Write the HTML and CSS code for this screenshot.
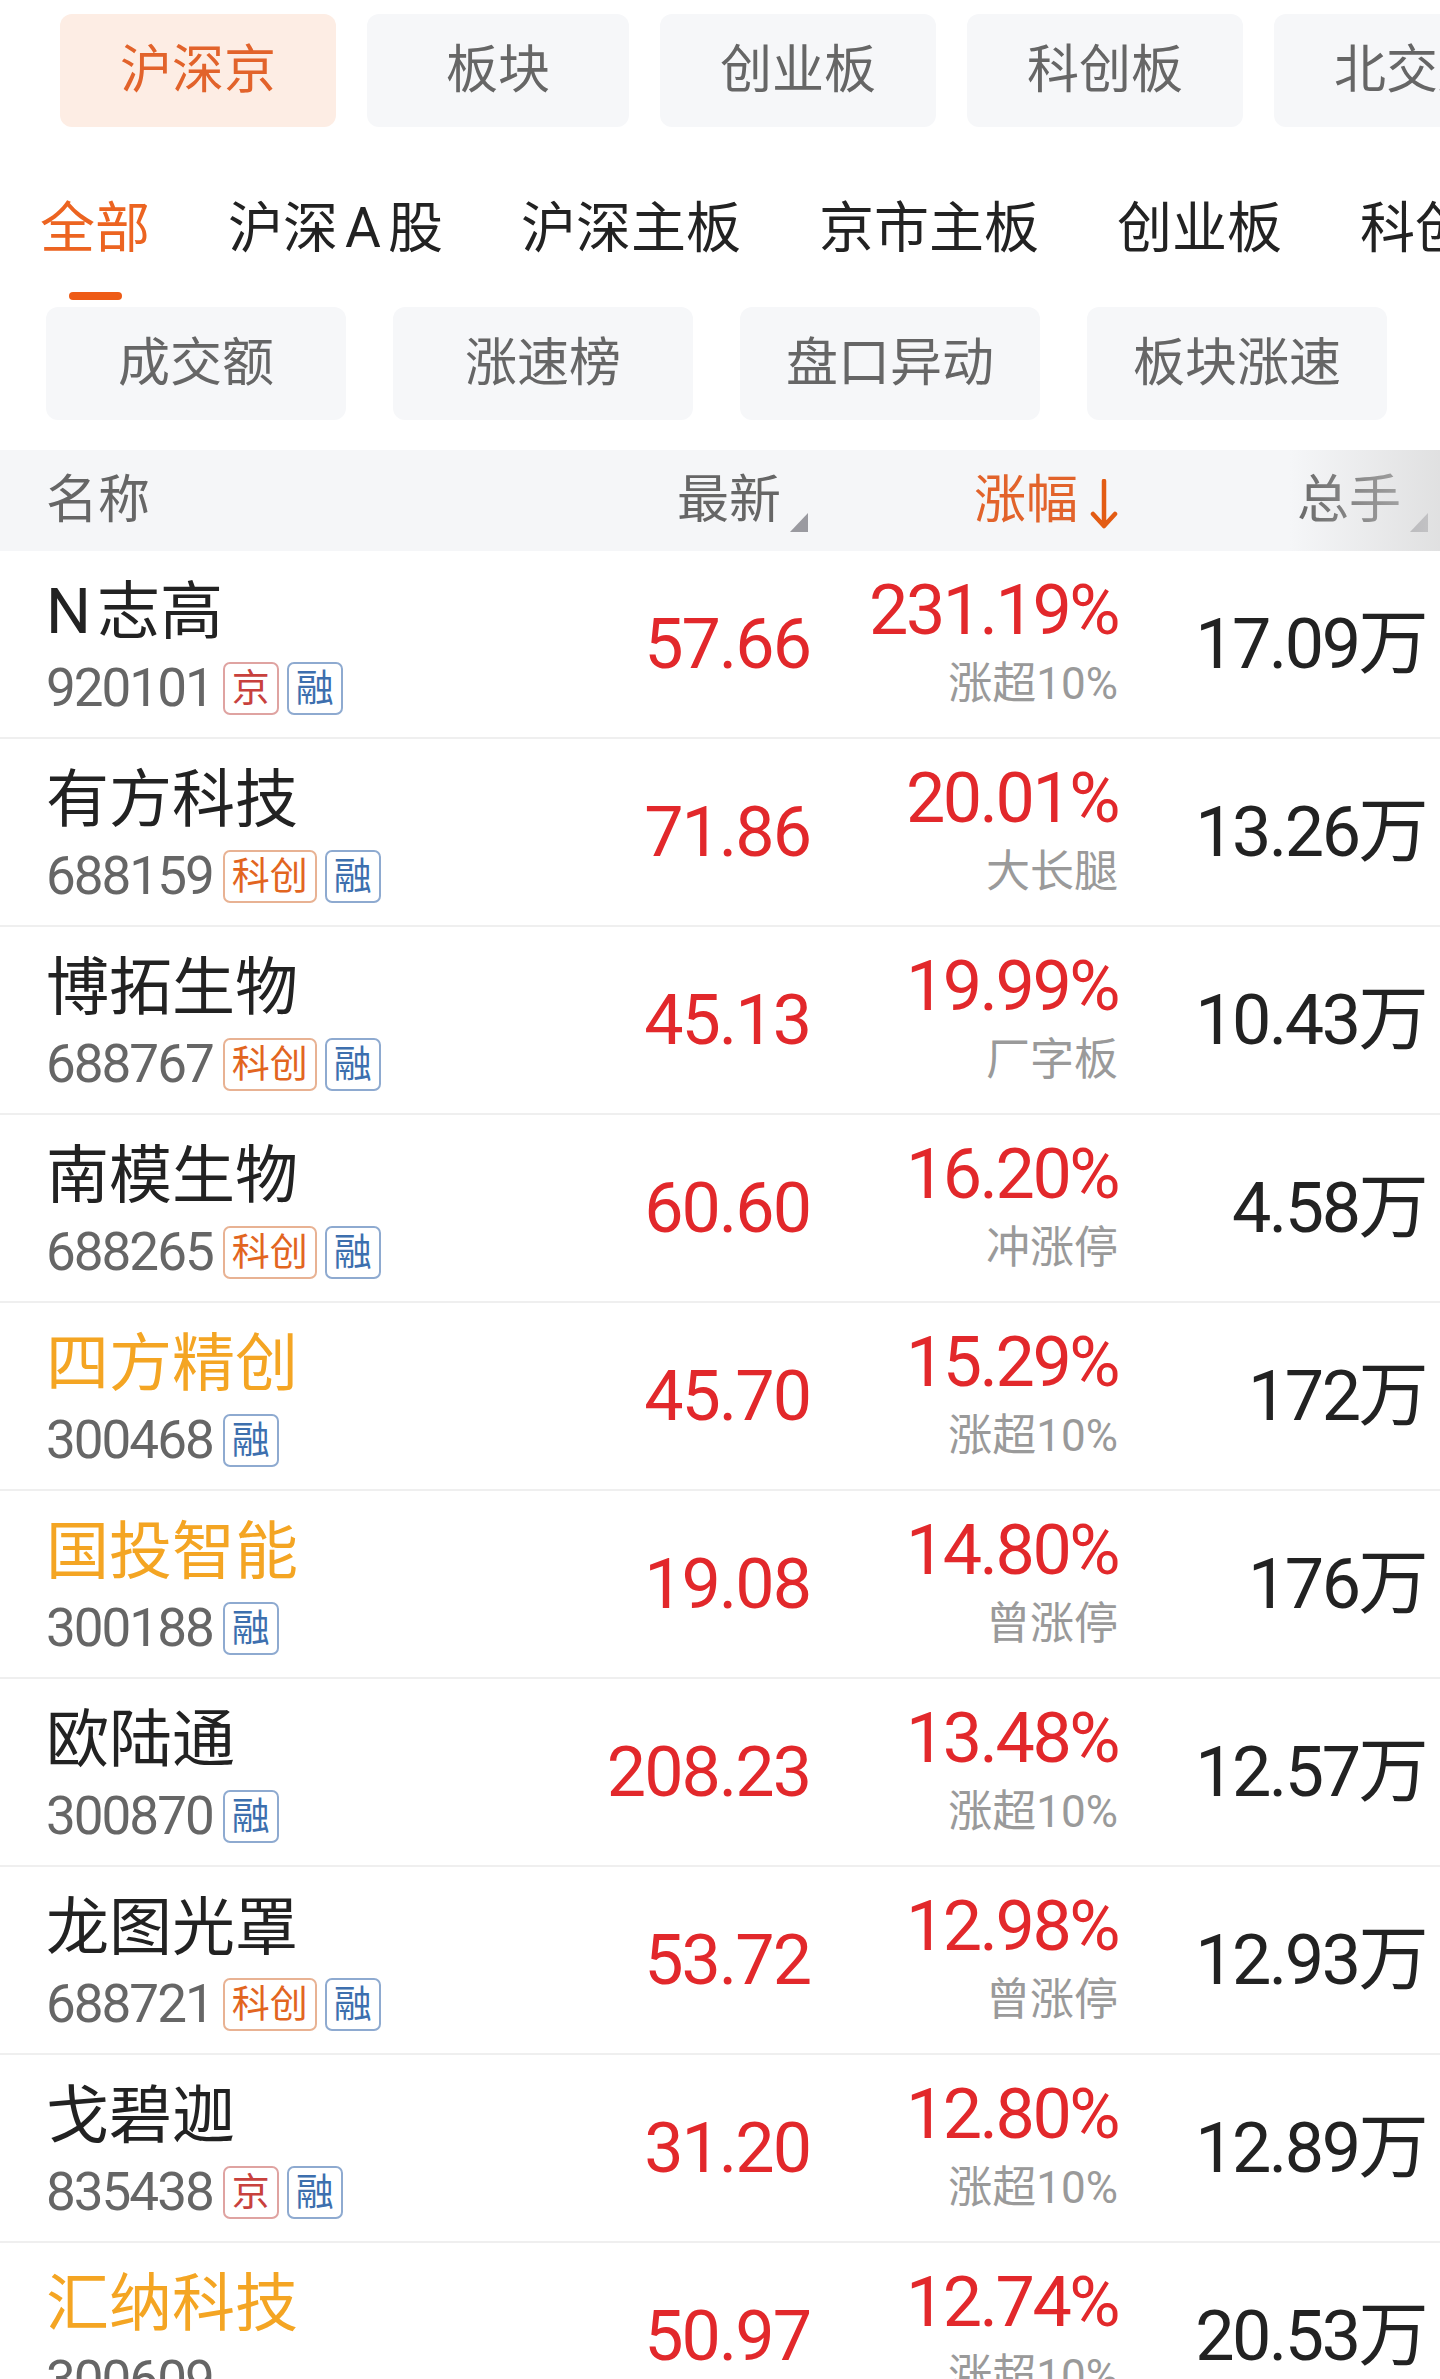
FILE: index.html
```html
<!DOCTYPE html>
<html lang="zh-CN">
<head>
    <meta charset="UTF-8">
    <meta name="viewport" content="width=device-width, initial-scale=1.0">
    <title>涨幅榜</title>
    <link rel="stylesheet" href="styles.css">
</head>
<body>

<!-- 市场切换 -->
<div class="market-tabs">
    <span class="market-tab active">沪深京</span>
    <span class="market-tab">板块</span>
    <span class="market-tab">创业板</span>
    <span class="market-tab">科创板</span>
    <span class="market-tab">北交所</span>
</div>

<!-- 二级分类 -->
<div class="sub-nav">
    <div class="sub-nav-item active"><span class="label">全部</span><i class="bar"></i></div>
    <div class="sub-nav-item"><span class="label">沪深<span class="latin">A</span>股</span></div>
    <div class="sub-nav-item"><span class="label">沪深主板</span></div>
    <div class="sub-nav-item"><span class="label">京市主板</span></div>
    <div class="sub-nav-item"><span class="label">创业板</span></div>
    <div class="sub-nav-item"><span class="label">科创板</span></div>
</div>

<!-- 榜单按钮 -->
<div class="filters">
    <span class="filter-btn">成交额</span>
    <span class="filter-btn">涨速榜</span>
    <span class="filter-btn">盘口异动</span>
    <span class="filter-btn">板块涨速</span>
</div>

<!-- 行情列表 -->
<div class="stock-table">
    <div class="table-head">
        <div class="col-name">名称</div>
        <div class="col-price">最新<svg class="sort-tri" width="18" height="19" viewBox="0 0 18 19"><path d="M18 0V19H0Z" fill="#9a9aa0"/></svg></div>
        <div class="col-change sorted">涨幅<svg class="sort-arrow" width="28" height="51" viewBox="0 0 28 51"><path d="M14 2V47M3 35L14 47L25 35" fill="none" stroke="#e35c14" stroke-width="4.5" stroke-linecap="round" stroke-linejoin="round"/></svg></div>
        <div class="col-volume">总手<svg class="sort-tri last" width="18" height="19" viewBox="0 0 18 19"><path d="M18 0V19H0Z" fill="#9a9aa0"/></svg></div>
        <div class="head-fade"></div>
    </div>

    <div class="stock-row">
        <div class="col-name">
            <div class="stock-name"><span class="latin">N</span>志高</div>
            <div class="stock-code">920101<span class="tag tag-bj">京</span><span class="tag tag-rong">融</span></div>
        </div>
        <div class="col-price up">57.66</div>
        <div class="col-change"><div class="pct up">231.19%</div><div class="note">涨超10%</div></div>
        <div class="col-volume">17.09万</div>
    </div>

    <div class="stock-row">
        <div class="col-name">
            <div class="stock-name">有方科技</div>
            <div class="stock-code">688159<span class="tag tag-kc">科创</span><span class="tag tag-rong">融</span></div>
        </div>
        <div class="col-price up">71.86</div>
        <div class="col-change"><div class="pct up">20.01%</div><div class="note">大长腿</div></div>
        <div class="col-volume">13.26万</div>
    </div>

    <div class="stock-row">
        <div class="col-name">
            <div class="stock-name">博拓生物</div>
            <div class="stock-code">688767<span class="tag tag-kc">科创</span><span class="tag tag-rong">融</span></div>
        </div>
        <div class="col-price up">45.13</div>
        <div class="col-change"><div class="pct up">19.99%</div><div class="note">厂字板</div></div>
        <div class="col-volume">10.43万</div>
    </div>

    <div class="stock-row">
        <div class="col-name">
            <div class="stock-name">南模生物</div>
            <div class="stock-code">688265<span class="tag tag-kc">科创</span><span class="tag tag-rong">融</span></div>
        </div>
        <div class="col-price up">60.60</div>
        <div class="col-change"><div class="pct up">16.20%</div><div class="note">冲涨停</div></div>
        <div class="col-volume">4.58万</div>
    </div>

    <div class="stock-row">
        <div class="col-name">
            <div class="stock-name hot">四方精创</div>
            <div class="stock-code">300468<span class="tag tag-rong">融</span></div>
        </div>
        <div class="col-price up">45.70</div>
        <div class="col-change"><div class="pct up">15.29%</div><div class="note">涨超10%</div></div>
        <div class="col-volume">172万</div>
    </div>

    <div class="stock-row">
        <div class="col-name">
            <div class="stock-name hot">国投智能</div>
            <div class="stock-code">300188<span class="tag tag-rong">融</span></div>
        </div>
        <div class="col-price up">19.08</div>
        <div class="col-change"><div class="pct up">14.80%</div><div class="note">曾涨停</div></div>
        <div class="col-volume">176万</div>
    </div>

    <div class="stock-row">
        <div class="col-name">
            <div class="stock-name">欧陆通</div>
            <div class="stock-code">300870<span class="tag tag-rong">融</span></div>
        </div>
        <div class="col-price up">208.23</div>
        <div class="col-change"><div class="pct up">13.48%</div><div class="note">涨超10%</div></div>
        <div class="col-volume">12.57万</div>
    </div>

    <div class="stock-row">
        <div class="col-name">
            <div class="stock-name">龙图光罩</div>
            <div class="stock-code">688721<span class="tag tag-kc">科创</span><span class="tag tag-rong">融</span></div>
        </div>
        <div class="col-price up">53.72</div>
        <div class="col-change"><div class="pct up">12.98%</div><div class="note">曾涨停</div></div>
        <div class="col-volume">12.93万</div>
    </div>

    <div class="stock-row">
        <div class="col-name">
            <div class="stock-name">戈碧迦</div>
            <div class="stock-code">835438<span class="tag tag-bj">京</span><span class="tag tag-rong">融</span></div>
        </div>
        <div class="col-price up">31.20</div>
        <div class="col-change"><div class="pct up">12.80%</div><div class="note">涨超10%</div></div>
        <div class="col-volume">12.89万</div>
    </div>

    <div class="stock-row">
        <div class="col-name">
            <div class="stock-name hot">汇纳科技</div>
            <div class="stock-code">300609</div>
        </div>
        <div class="col-price up">50.97</div>
        <div class="col-change"><div class="pct up">12.74%</div><div class="note">涨超10%</div></div>
        <div class="col-volume">20.53万</div>
    </div>
</div>

</body>
</html>
```

FILE: styles.css
```css
* {
    box-sizing: border-box;
}

html, body {
    margin: 0;
    overflow: hidden;
}

body {
    width: 1440px;
    font-family: Roboto, "Noto Sans CJK SC", sans-serif;
    background: #fff;
    color: #222;
}

/* 顶部市场切换 */
.market-tabs {
    display: flex;
    gap: 31px;
    padding: 14px 0 0 60px;
    overflow: hidden;
    white-space: nowrap;
}

.market-tab {
    flex-shrink: 0;
    min-width: 262px;
    height: 113px;
    padding: 0 60px;
    border-radius: 12px;
    background: #f6f7f9;
    color: #666;
    font-size: 52px;
    line-height: 113px;
    text-align: center;
}

.market-tab.active {
    background: #fdede4;
    color: #e2632b;
}

/* 二级分类 */
.sub-nav {
    display: flex;
    align-items: flex-start;
    gap: 78px;
    padding: 74px 0 0 40px;
    overflow: hidden;
    white-space: nowrap;
}

.sub-nav-item {
    flex-shrink: 0;
    display: flex;
    flex-direction: column;
    align-items: center;
    font-size: 55px;
    line-height: 55px;
    color: #222;
}

.sub-nav-item .latin {
    margin: 0 7px;
}

.sub-nav-item.active {
    color: #ec6421;
}

.sub-nav-item .bar {
    width: 53px;
    height: 8px;
    margin-top: 36px;
    border-radius: 4px;
    background: #ee5b16;
}

/* 榜单按钮 */
.filters {
    display: flex;
    gap: 47px;
    padding: 7px 0 0 46px;
}

.filter-btn {
    width: 300px;
    height: 113px;
    border-radius: 12px;
    background: #f6f7f9;
    color: #666;
    font-size: 52px;
    line-height: 113px;
    text-align: center;
}

/* 表格 */
.stock-table {
    margin-top: 30px;
}

.table-head,
.stock-row {
    display: grid;
    grid-template-columns: 1fr 262px 312px 304px;
    padding: 0 14px 0 46px;
}

.table-head {
    position: relative;
    height: 101px;
    align-items: center;
    background: #f5f6f8;
    color: #666;
    font-size: 52px;
    line-height: 52px;
}

.table-head .col-price,
.table-head .col-change,
.table-head .col-volume {
    display: flex;
    align-items: flex-end;
    justify-content: flex-end;
}

.table-head .col-price {
    margin-right: 2px;
}

.table-head .col-change {
    margin-right: 4px;
}

.table-head .sorted {
    color: #e2632b;
}

.sort-tri {
    margin: 0 0 -5px 9px;
}

.sort-tri.last {
    margin-right: -2px;
}

.sort-arrow {
    margin: 0 0 -3px 12px;
}

/* 右侧可滚动的渐隐提示 */
.head-fade {
    position: absolute;
    top: 0;
    right: 0;
    bottom: 0;
    width: 150px;
    background: linear-gradient(to right, rgba(215, 215, 215, 0), rgba(215, 215, 215, 0.7));
    pointer-events: none;
}

.stock-row {
    height: 188px;
    align-items: center;
    border-bottom: 2px solid #efefef;
}

.stock-row .col-name {
    align-self: start;
    padding-top: 29px;
}

.stock-name {
    font-size: 63px;
    line-height: 63px;
    color: #222;
    white-space: nowrap;
}

.stock-name .latin {
    margin-right: 6px;
}

.stock-name.hot {
    color: #f4a523;
}

.stock-code {
    display: flex;
    align-items: center;
    height: 53px;
    margin-top: 19px;
    font-size: 53px;
    line-height: 53px;
    color: #666;
    letter-spacing: -2px;
}

.tag {
    height: 53px;
    padding: 0 7px;
    margin-left: 10px;
    border: 2px solid;
    border-radius: 7px;
    font-size: 38px;
    line-height: 49px;
    letter-spacing: 0;
}

.tag + .tag {
    margin-left: 8px;
}

.tag-bj {
    color: #c8413d;
    border-color: #dfa3a1;
}

.tag-kc {
    color: #e2651f;
    border-color: #e8b293;
}

.tag-rong {
    color: #3d6fae;
    border-color: #8eaad0;
}

.stock-row .col-price {
    text-align: right;
    font-size: 70px;
    line-height: 70px;
    letter-spacing: -2px;
}

.up {
    color: #e2282b;
}

.stock-row .col-change {
    align-self: start;
    display: flex;
    flex-direction: column;
    align-items: flex-end;
    padding-top: 24px;
    margin-right: 4px;
}

.pct {
    font-size: 70px;
    line-height: 70px;
    letter-spacing: -2.5px;
}

.note {
    margin-top: 17px;
    font-size: 44px;
    line-height: 44px;
    color: #9a9a9a;
}

.stock-row .col-volume {
    text-align: right;
    font-size: 70px;
    line-height: 70px;
    color: #222;
    letter-spacing: -2.5px;
}
```
